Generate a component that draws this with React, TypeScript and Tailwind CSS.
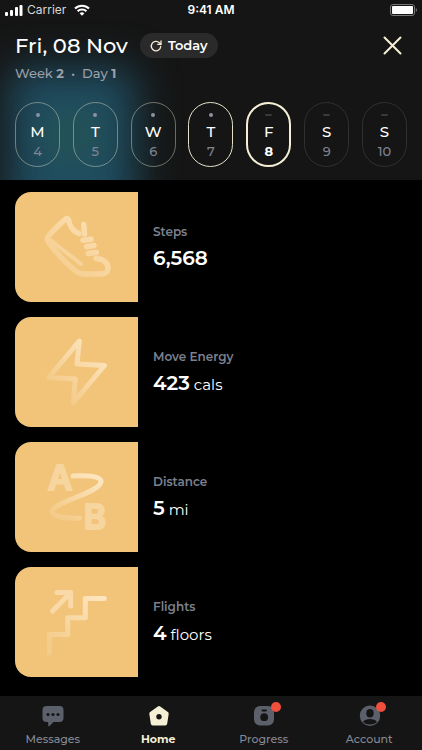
import React, { useState } from 'react';
import clsx from 'clsx';

interface Day {
  letter: string;
  date: number;
  state: 'past' | 'recent' | 'future';
}

const days: Day[] = [
  { letter: 'M', date: 4, state: 'past' },
  { letter: 'T', date: 5, state: 'past' },
  { letter: 'W', date: 6, state: 'past' },
  { letter: 'T', date: 7, state: 'recent' },
  { letter: 'F', date: 8, state: 'future' },
  { letter: 'S', date: 9, state: 'future' },
  { letter: 'S', date: 10, state: 'future' },
];

const pillBorder = {
  past: 'border pt-px border-[#f5efd5]/40',
  recent: 'border pt-px border-[#e6e1cb]',
  selected: 'border-2 border-[#f5efd5]',
  future: 'border pt-px border-[#303031]',
};

const StatusBar = () => (
  <div className="relative grid h-5 grid-cols-3 items-center px-[5px] font-['Inter',sans-serif] text-xs leading-5 text-white">
    <div className="flex items-center">
      <svg width="18" height="12" viewBox="0 0 18 12" fill="currentColor" aria-hidden="true">
        <rect x="0" y="8" width="3" height="4" rx="1" />
        <rect x="5" y="6" width="3" height="6" rx="1" />
        <rect x="10" y="3" width="3" height="9" rx="1" />
        <rect x="14.5" y="1" width="3" height="11" rx="1" />
      </svg>
      <span className="ml-1 text-[#d8d8d8]">Carrier</span>
      <svg className="ml-2" width="16" height="12" viewBox="0 0 16 12" aria-hidden="true">
        <g fill="none" stroke="currentColor" strokeWidth="2.1">
          <path d="M1 4.6a10 10 0 0 1 14 0" />
          <path d="M3.6 7.3a6.3 6.3 0 0 1 8.8 0" />
        </g>
        <path d="M8 11.8 5.6 9.3a3.5 3.5 0 0 1 4.8 0Z" fill="currentColor" />
      </svg>
    </div>
    <span className="text-center font-semibold">9:41 AM</span>
    <svg className="justify-self-end" width="27" height="12" viewBox="0 0 27 12" aria-hidden="true">
      <rect x="0.5" y="0.5" width="24" height="11" rx="2.5" fill="none" stroke="#777" />
      <rect x="2" y="2" width="21" height="8" rx="1" fill="#fff" />
      <path d="M25.8 4v4c.8-.4 1.2-1.1 1.2-2s-.4-1.6-1.2-2Z" fill="#777" />
    </svg>
  </div>
);

const ShoeIcon = () => (
  <svg width="72" height="72" viewBox="0 0 72 72" fill="none" stroke="url(#shoe)" strokeWidth="5.5" strokeLinecap="round" strokeLinejoin="round" aria-hidden="true">
    <defs>
      <linearGradient id="shoe" gradientUnits="userSpaceOnUse" x1="56" y1="8" x2="14" y2="62">
        <stop stopColor="#fbe0b4" />
        <stop offset="1" stopColor="#f5cc8b" />
      </linearGradient>
    </defs>
    <path d="M38 22.500C32 20.500 28.500 14 27.500 9c-.3-1.600-1.500-2-2.800-.8C18 13 13.500 18.500 7.500 25c-1.600 1.800-1.500 3.600-.4 5.400C15 42 25 52 34.500 60c2.800 2.300 5 3 8.500 3h17.500c4.500 0 6.500-3 6.500-6 0-5.500-5-9-12-9.500" />
    <path d="M42.700 13.500 43.500 23" />
    <path d="M42 29.300 50 28.300M45.500 35.800l7.500-1.300M47.300 42.500l8-1" />
    <path d="M10 29.500c8 7 20 15.500 30 23.500" strokeWidth="4" />
  </svg>
);

const BoltIcon = () => (
  <svg width="72" height="72" viewBox="0 0 72 72" fill="none" stroke="url(#bolt)" strokeWidth="5" strokeLinecap="round" strokeLinejoin="round" aria-hidden="true">
    <defs>
      <linearGradient id="bolt" gradientUnits="userSpaceOnUse" x1="58" y1="14" x2="18" y2="54">
        <stop stopColor="#fce4bc" />
        <stop offset="1" stopColor="#f4cb8a" />
      </linearGradient>
    </defs>
    <path d="M38.300 5 7.700 41.500 34.300 43 32.300 66.500 63.500 29.500 36 28Z" />
  </svg>
);

const RouteIcon = () => (
  <svg className="overflow-visible" width="72" height="72" viewBox="0 0 72 72" aria-hidden="true">
    <defs>
      <linearGradient id="route" gradientUnits="userSpaceOnUse" x1="54" y1="12" x2="22" y2="56">
        <stop stopColor="#fde7c2" />
        <stop offset="1" stopColor="#f4cb8a" />
      </linearGradient>
    </defs>
    <path d="M32 15c8-.5 28-1 28 5.500 0 11-49 21-49 30 0 5.500 15 7 27.500 6.800" fill="none" stroke="url(#route)" strokeWidth="5" strokeLinecap="round" />
    <g fill="#f7d59f" stroke="#f7d59f" strokeWidth="2" strokeLinejoin="round" textAnchor="middle" className="font-['Inter',sans-serif] text-[34px] font-semibold">
      <text x="19" y="29">A</text>
      <text x="54" y="68">B</text>
    </g>
  </svg>
);

const StairsIcon = () => (
  <svg width="72" height="72" viewBox="0 0 72 72" fill="none" stroke="url(#stairs)" strokeWidth="5" strokeLinecap="round" strokeLinejoin="round" aria-hidden="true">
    <defs>
      <linearGradient id="stairs" gradientUnits="userSpaceOnUse" x1="58" y1="8" x2="12" y2="62">
        <stop stopColor="#fde6bf" />
        <stop offset="1" stopColor="#f4cb8a" />
      </linearGradient>
    </defs>
    <path d="M8.300 67V48.500h18.400V31.800h17.600V12.500h19" />
    <path d="M11.500 25 29.500 7M16 6.500h13.700V20" stroke="#f9d9a7" />
  </svg>
);

const metrics = [
  { label: 'Steps', value: '6,568', unit: '', icon: <ShoeIcon /> },
  { label: 'Move Energy', value: '423', unit: 'cals', icon: <BoltIcon /> },
  { label: 'Distance', value: '5', unit: 'mi', icon: <RouteIcon /> },
  { label: 'Flights', value: '4', unit: 'floors', icon: <StairsIcon /> },
];

const MessagesIcon = () => (
  <svg width="24" height="24" viewBox="0 0 24 24" aria-hidden="true">
    <path d="M5.500 2h13A4 4 0 0 1 22.500 6v8a4 4 0 0 1-4 4h-6l-4 4c-.6.5-1.300.3-1.300-.6V18H5.500a4 4 0 0 1-4-4V6a4 4 0 0 1 4-4Z" fill="#5b606b" />
    <g fill="#151515">
      <circle cx="7" cy="10.5" r="1.6" />
      <circle cx="12" cy="10.5" r="1.6" />
      <circle cx="17" cy="10.5" r="1.6" />
    </g>
  </svg>
);

const HomeIcon = () => (
  <svg width="24" height="24" viewBox="0 0 24 24" aria-hidden="true">
    <path d="m13 4 7.700 5.700-1.500 9.800H6.800L5.300 9.700Z" fill="#f5efd5" stroke="#f5efd5" strokeWidth="4" strokeLinejoin="round" />
    <circle cx="13" cy="12.7" r="2.7" fill="#151515" />
  </svg>
);

const ProgressIcon = () => (
  <svg width="24" height="24" viewBox="0 0 24 24" aria-hidden="true">
    <rect x="2" y="2" width="20" height="19.5" rx="6" fill="#5b606b" />
    <rect x="9.5" y="5.5" width="5.5" height="2" rx="1" fill="#151515" />
    <circle cx="12.2" cy="13.2" r="3.9" fill="#151515" />
  </svg>
);

const AccountIcon = () => (
  <svg width="24" height="24" viewBox="0 0 24 24" aria-hidden="true">
    <circle cx="13" cy="11.8" r="10.2" fill="#5b606b" />
    <ellipse cx="13" cy="9.3" rx="3.7" ry="4.2" fill="#151515" />
    <path d="M6 18c1.500-2.300 4-3 7-3s5.500.7 7 3c-1.800 1.700-4.200 2.500-7 2.500S7.800 19.700 6 18Z" fill="#151515" />
  </svg>
);

const tabs = [
  { name: 'Messages', icon: <MessagesIcon />, badge: false },
  { name: 'Home', icon: <HomeIcon />, badge: false },
  { name: 'Progress', icon: <ProgressIcon />, badge: true },
  { name: 'Account', icon: <AccountIcon />, badge: true },
];

const App = () => {
  const [selected, setSelected] = useState(8);

  return (
    <div className="flex min-h-screen flex-col bg-black font-['Montserrat','Inter',sans-serif] text-white">
      {/* Header */}
      <header className="relative overflow-hidden bg-[#151515] pb-[13px]">
        {/* Blue glow */}
        <div className="absolute top-[68px] left-2 h-40 w-32 rounded-xl bg-[#204d60] blur-[20px]" />
        <div className="absolute top-28 left-10 h-12 w-16 rounded-full bg-[#27564f]/60 blur-lg" />

        <StatusBar />

        <div className="relative flex items-center px-[15px] pt-[11px]">
          <h1 className="text-[21px] font-medium leading-7">Fri, 08 Nov</h1>
          <button type="button" className="ml-3 flex h-[25px] items-center gap-[6px] rounded-full bg-[#2a2a2b] px-[10px] text-[13px] font-semibold">
            <svg width="12" height="12" viewBox="0 0 12 12" fill="none" stroke="#f5efd5" strokeWidth="1.3" strokeLinecap="round" strokeLinejoin="round" aria-hidden="true">
              <path d="M10.700 6.500A4.700 4.700 0 1 1 9.300 2.700l1.600 1.500" />
              <path d="M11 1v3.300H7.700" />
            </svg>
            Today
          </button>
          <button type="button" aria-label="Close" className="ml-auto p-[5px]">
            <svg width="19" height="19" viewBox="0 0 19 19" stroke="#f5efd5" strokeWidth="2" strokeLinecap="round" aria-hidden="true">
              <path d="m1.500 1.500 16 16M17.500 1.500l-16 16" />
            </svg>
          </button>
        </div>

        <p className="relative px-[15px] pt-[3px] text-[13px] font-medium leading-5 text-[#9a9fa8]">
          Week <b className="font-bold">2</b>
          <span className="mx-[7px]">•</span>
          Day <b className="font-bold">1</b>
        </p>

        <div className="relative flex justify-between px-[15px] pt-[19px]">
          {days.map((day) => (
            <button
              key={day.date}
              type="button"
              aria-pressed={selected === day.date}
              onClick={() => setSelected(day.date)}
              className={clsx(
                'flex h-[65px] w-[45px] flex-col items-center rounded-full',
                pillBorder[selected === day.date ? 'selected' : day.state]
              )}
            >
              <span className="flex h-[22px] items-center">
                {day.state === 'future' ? (
                  <span className="h-[2px] w-[7px] rounded-full bg-[#3a3a3b]" />
                ) : (
                  <span className="size-1 rounded-full bg-[#8d91a0]" />
                )}
              </span>
              <span className="text-[15px] font-medium leading-3">{day.letter}</span>
              <span className={clsx('mt-[5px] text-[13px] leading-4', selected === day.date ? 'font-bold' : 'font-medium text-[#7f8392]')}>
                {day.date}
              </span>
            </button>
          ))}
        </div>
      </header>

      {/* Metrics */}
      <main className="flex flex-1 flex-col gap-[15px] px-[15px] pt-3 pb-4">
        {metrics.map((item) => (
          <section key={item.label} className="flex items-center gap-[15px]">
            <div className="flex h-[110px] w-[123px] shrink-0 items-center justify-center rounded-l-2xl bg-[#f2c47a]">
              {item.icon}
            </div>
            <div className="pt-[2px]">
              <h2 className="text-xs font-semibold leading-5 text-[#7c808e]">{item.label}</h2>
              <p className="mt-[2px] text-[15px] leading-7">
                <span className="text-xl font-semibold">{item.value}</span> {item.unit}
              </p>
            </div>
          </section>
        ))}
      </main>

      {/* Tab bar */}
      <nav className="grid grid-cols-4 bg-[#151515] pt-2 pb-px">
        {tabs.map((tab) => (
          <a
            key={tab.name}
            href={`#${tab.name.toLowerCase()}`}
            className={clsx(
              'flex flex-col items-center text-[11px] leading-5',
              tab.name === 'Home' ? 'font-bold text-[#f5efd5]' : 'font-medium text-[#858995]'
            )}
          >
            <span className="relative">
              {tab.icon}
              {tab.badge && <span className="absolute -top-[2px] -right-[5px] size-[10px] rounded-full bg-[#f04f3e]" />}
            </span>
            <span className="pt-px">{tab.name}</span>
          </a>
        ))}
      </nav>
    </div>
  );
};

export default App;
